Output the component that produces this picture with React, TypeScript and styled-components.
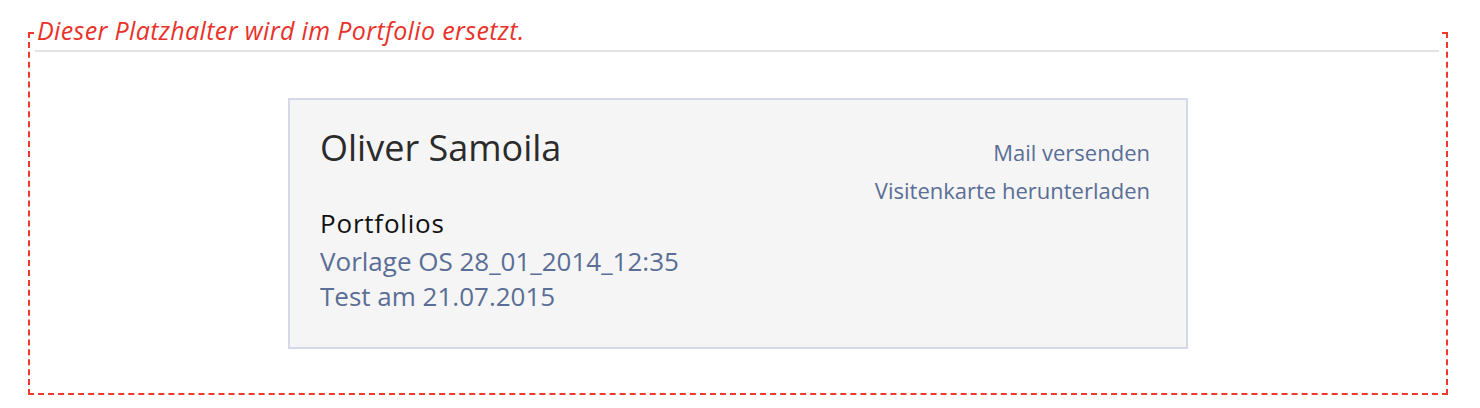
import React from "react";
import styled, { createGlobalStyle } from "styled-components";

const Global = createGlobalStyle`
  html, body { margin: 0; padding: 0; background: #ffffff; }
  body { font-family: "Open Sans", "Liberation Sans", sans-serif; }
`;

const Page = styled.div`
  width: 1480px;
  height: 408px;
  box-sizing: border-box;
  padding: 32px 32px 13px 28px;
`;

const Frame = styled.section`
  box-sizing: border-box;
  width: 1420px;
  height: 363px;
  border: 2px dashed #ee3a2c;
  padding: 0 5px 0 5px;
  display: flex;
  flex-direction: column;
  align-items: stretch;
`;

const Title = styled.h2`
  margin: -21px 2px 0 0;
  padding: 0 0 3px 2px;
  background: #ffffff;
  border-bottom: 2px solid #e3e3e3;
  font-family: "Open Sans", sans-serif;
  font-style: italic;
  font-weight: 500;
  font-size: 25px;
  line-height: 34px;
  letter-spacing: 0.36px;
  color: #e8322a;
`;

const Card = styled.article`
  box-sizing: border-box;
  align-self: center;
  width: 900px;
  height: 251px;
  margin-top: 46px;
  background: #f5f5f5;
  border: 2px solid #d4d8e8;
  padding: 23px 36px 20px 30px;
  display: flex;
  justify-content: space-between;
`;

const Column = styled.div<{ $align?: "start" | "end" }>`
  display: flex;
  flex-direction: column;
  align-items: ${(p) => (p.$align === "end" ? "flex-end" : "flex-start")};
`;

const Name = styled.h1`
  margin: 0 0 33px 0;
  font-weight: 400;
  font-size: 36px;
  line-height: 49px;
  color: #2b2b2b;
`;

const SectionHead = styled.h3`
  margin: 0 0 3px 0;
  font-weight: 400;
  font-size: 26px;
  line-height: 36px;
  letter-spacing: 0.8px;
  color: #111111;
`;

const Link = styled.a<{ $size?: number; $lh?: number }>`
  color: #5a6e96;
  text-decoration: none;
  font-size: ${(p) => p.$size ?? 26}px;
  line-height: ${(p) => p.$lh ?? 35}px;
`;

const Actions = styled(Column)`
  padding-top: 10px;
`;

export default function App() {
  return (
    <>
      <Global />
      <Page>
        <Frame>
          <Title>Dieser Platzhalter wird im Portfolio ersetzt.</Title>
          <Card>
            <Column>
              <Name>Oliver Samoila</Name>
              <SectionHead>Portfolios</SectionHead>
              <Link href="#">Vorlage OS 28_01_2014_12:35</Link>
              <Link href="#">Test am 21.07.2015</Link>
            </Column>
            <Actions $align="end">
              <Link href="#" $size={22} $lh={38}>Mail versenden</Link>
              <Link href="#" $size={22} $lh={38}>Visitenkarte herunterladen</Link>
            </Actions>
          </Card>
        </Frame>
      </Page>
    </>
  );
}
